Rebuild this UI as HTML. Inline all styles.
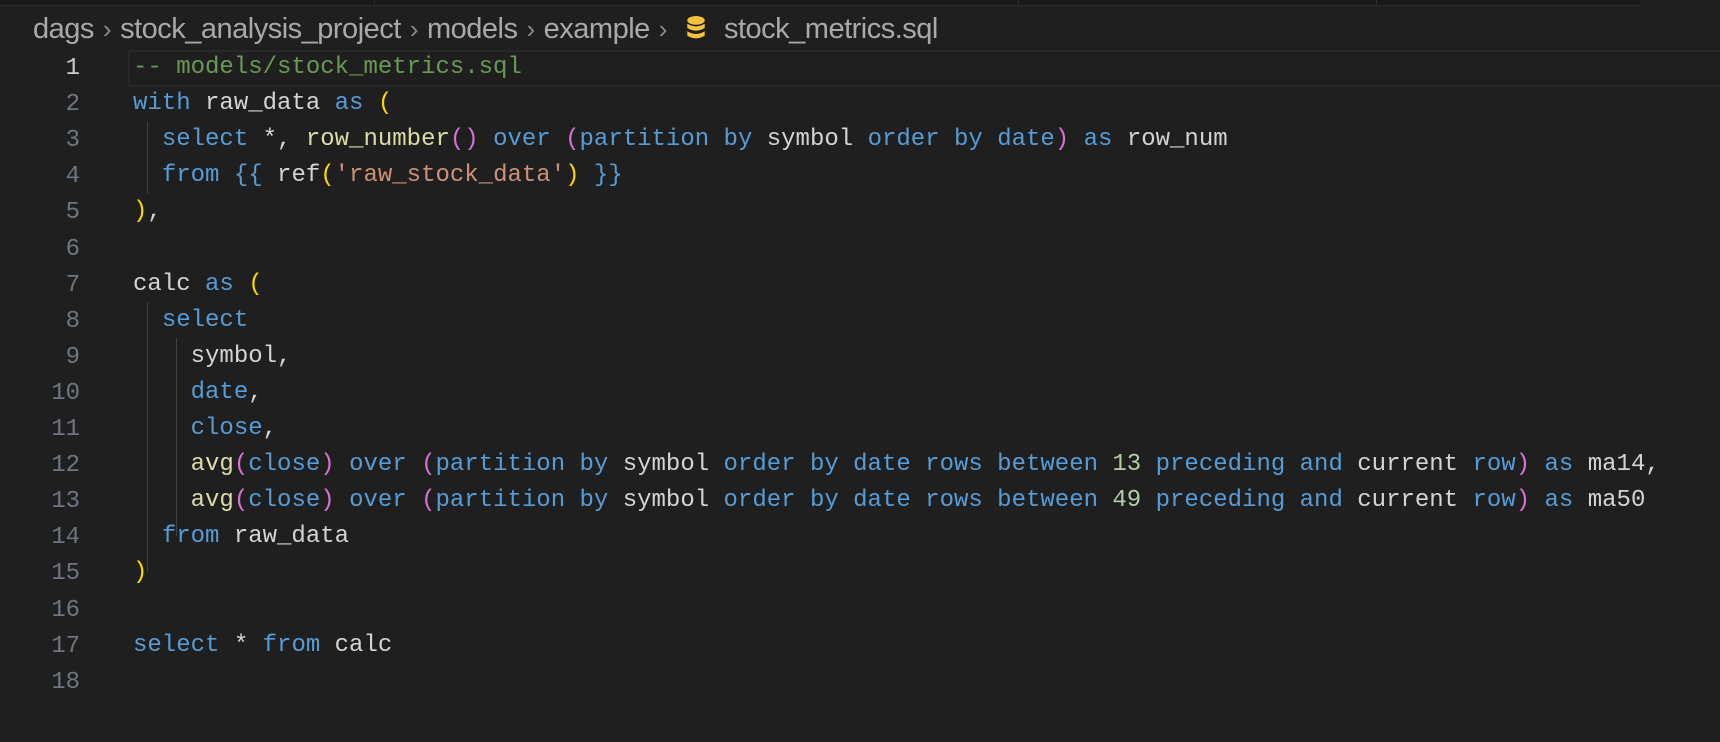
<!DOCTYPE html>
<html><head><meta charset="utf-8"><style>
html,body{margin:0;padding:0;background:#1f1f1f;width:1720px;height:742px;overflow:hidden}
.top{position:absolute;left:0;top:0;width:1640px;height:5px;background:#181818;border-bottom:1px solid #2b2b2b}
.div{position:absolute;top:0;width:1px;height:5px;background:#2b2b2b}
.bc{position:absolute;left:33px;top:11px;font-family:"Liberation Sans",sans-serif;font-size:29px;color:#a9a9a9;white-space:nowrap;line-height:36px;letter-spacing:-0.5px}
.bc .s{color:#8a8a8a;margin:0 9px;font-size:26px}
.hl{position:absolute;left:128px;top:50px;right:0;height:33px;border:2px solid #282828;border-right:none}
.ln{position:absolute;left:0;width:80px;text-align:right;font-family:"Liberation Mono",monospace;font-size:24px;color:#6e7681}
.code{position:absolute;left:133px;font-family:"Liberation Mono",monospace;font-size:24px;color:#d4d4d4;white-space:pre}
.k{color:#569cd6}.c{color:#6a9955}.y{color:#ffd700}.p{color:#da70d6}.f{color:#dcdcaa}.s2{color:#ce9178}.n{color:#b5cea8}
.g{position:absolute;width:1px;background:#404040}
</style></head><body>
<div class="top"></div><div class="div" style="left:374px"></div><div class="div" style="left:1018px"></div><div class="div" style="left:1376px"></div>
<div class="bc">dags<span class="s">›</span>stock_analysis_project<span class="s">›</span>models<span class="s">›</span>example<span class="s">›</span><svg width="24" height="28" viewBox="0 0 22 24" style="vertical-align:-4px;margin:0 16px 0 8px"><ellipse cx="11" cy="5" rx="8" ry="4" fill="#f5c33b"/><path d="M3 8 Q11 13 19 8 V12 Q11 17 3 12Z" fill="#f5c33b"/><path d="M3 15 Q11 20 19 15 V19 Q11 24 3 19Z" fill="#f5c33b"/></svg>stock_metrics.sql</div>
<div class="hl"></div>
<div class="g" style="left:147px;top:122px;height:72px"></div>
<div class="g" style="left:147px;top:302px;height:270px"></div>
<div class="g" style="left:176px;top:338px;height:198px"></div>
<div id="lines"></div>
<script>
var L=[
'<span class="c">-- models/stock_metrics.sql</span>',
'<span class="k">with</span> raw_data <span class="k">as</span> <span class="y">(</span>',
'  <span class="k">select</span> *, <span class="f">row_number</span><span class="p">()</span> <span class="k">over</span> <span class="p">(</span><span class="k">partition by</span> symbol <span class="k">order by</span> <span class="k">date</span><span class="p">)</span> <span class="k">as</span> row_num',
'  <span class="k">from</span> <span class="k">{{</span> ref<span class="y">(</span><span class="s2">\'raw_stock_data\'</span><span class="y">)</span> <span class="k">}}</span>',
'<span class="y">)</span>,',
'',
'calc <span class="k">as</span> <span class="y">(</span>',
'  <span class="k">select</span>',
'    symbol,',
'    <span class="k">date</span>,',
'    <span class="k">close</span>,',
'    <span class="f">avg</span><span class="p">(</span><span class="k">close</span><span class="p">)</span> <span class="k">over</span> <span class="p">(</span><span class="k">partition by</span> symbol <span class="k">order by date rows between</span> <span class="n">13</span> <span class="k">preceding and</span> current <span class="k">row</span><span class="p">)</span> <span class="k">as</span> ma14,',
'    <span class="f">avg</span><span class="p">(</span><span class="k">close</span><span class="p">)</span> <span class="k">over</span> <span class="p">(</span><span class="k">partition by</span> symbol <span class="k">order by date rows between</span> <span class="n">49</span> <span class="k">preceding and</span> current <span class="k">row</span><span class="p">)</span> <span class="k">as</span> ma50',
'  <span class="k">from</span> raw_data',
'<span class="y">)</span>',
'',
'<span class="k">select</span> * <span class="k">from</span> calc',
''];
var h='';
for(var i=0;i<18;i++){var t=54+i*36.1;
h+='<div class="ln" style="top:'+(t+1)+'px'+(i==0?';color:#cccccc':'')+'">'+(i+1)+'</div>';
h+='<div class="code" style="top:'+t+'px">'+L[i]+'</div>';}
document.getElementById('lines').innerHTML=h;
</script>
</body></html>
